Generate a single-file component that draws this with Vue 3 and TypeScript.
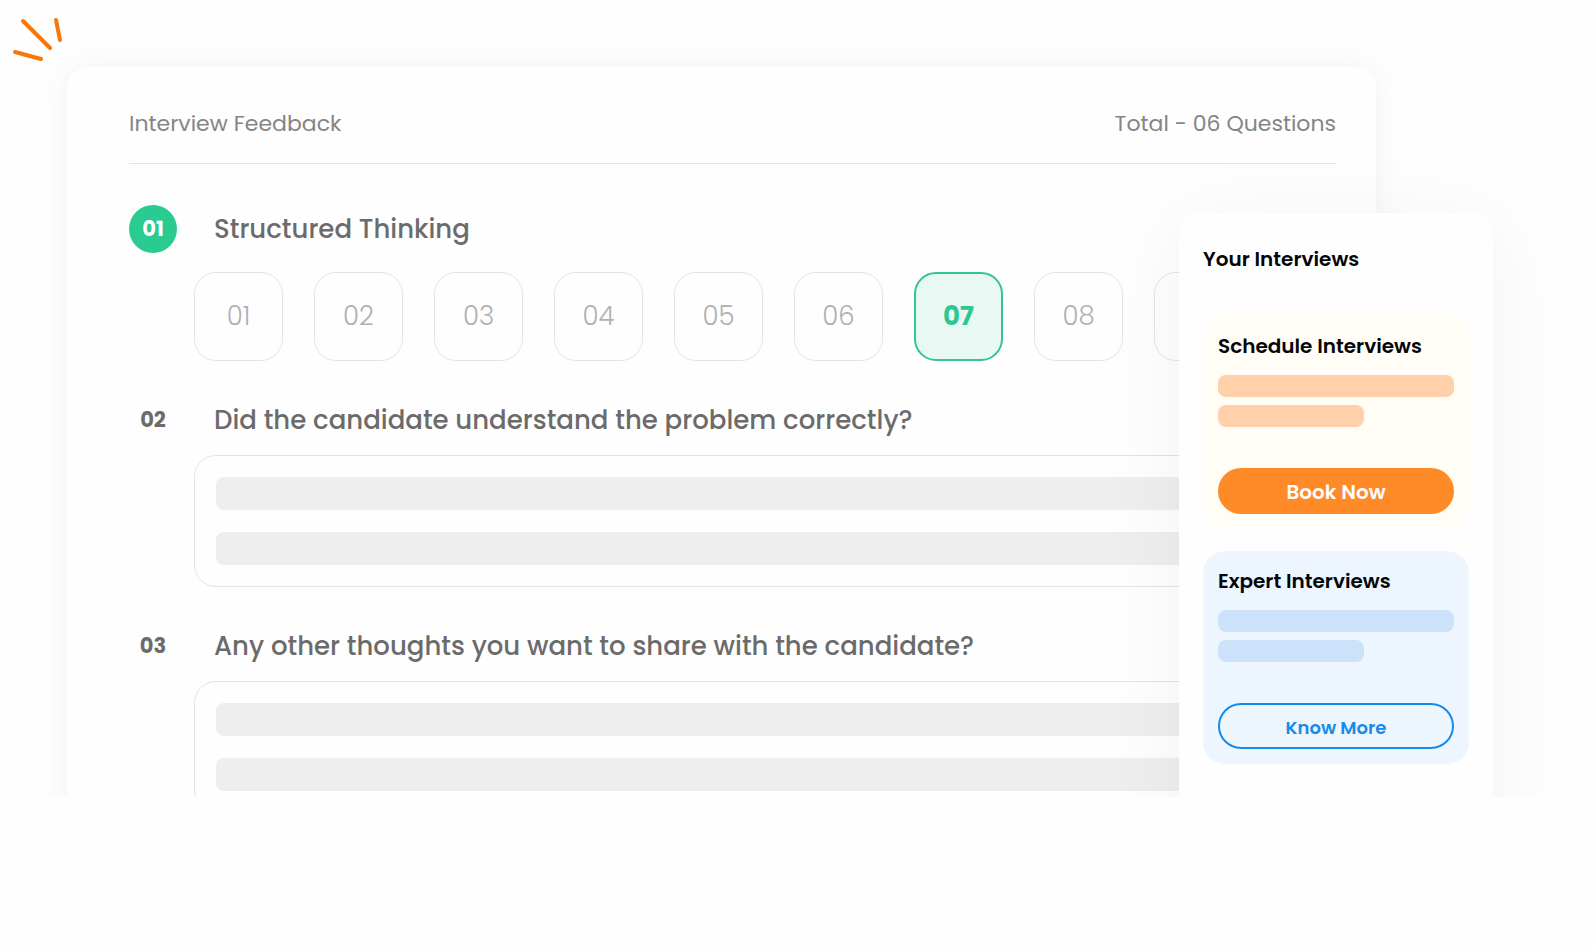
<script setup lang="ts">
import { ref } from 'vue'

interface Offer {
  id: string
  title: string
  action: string
}

const scores: string[] = ['01', '02', '03', '04', '05', '06', '07', '08', '09']
const selected = ref<string>('07')

const questions = [
  { number: '02', title: 'Did the candidate understand the problem correctly?' },
  { number: '03', title: 'Any other thoughts you want to share with the candidate?' },
]

const offers: Offer[] = [
  { id: 'schedule', title: 'Schedule Interviews', action: 'Book Now' },
  { id: 'expert', title: 'Expert Interviews', action: 'Know More' },
]
</script>

<template>
  <main class="stage">
    <svg class="spark" viewBox="0 0 52 46" aria-hidden="true">
      <path d="M11 5 38 32M44 4 48 24M3 36 29 43" />
    </svg>

    <section class="feedback">
      <header class="feedback-head">
        <span>Interview Feedback</span>
        <span>Total - 06 Questions</span>
      </header>

      <article class="question">
        <div class="question-head">
          <span class="number active">01</span>
          <h2>Structured Thinking</h2>
        </div>
        <div class="scores" role="group" aria-label="Structured Thinking">
          <button
            v-for="score in scores"
            :key="score"
            type="button"
            class="score"
            :class="{ selected: score === selected }"
            :aria-pressed="score === selected"
            @click="selected = score"
          >
            {{ score }}
          </button>
        </div>
      </article>

      <article v-for="question in questions" :key="question.number" class="question">
        <div class="question-head">
          <span class="number">{{ question.number }}</span>
          <h2>{{ question.title }}</h2>
        </div>
        <div class="answer">
          <div class="line"></div>
          <div class="line"></div>
        </div>
      </article>
    </section>

    <aside class="panel">
      <h2 class="panel-title">Your Interviews</h2>
      <section v-for="offer in offers" :key="offer.id" class="offer" :class="offer.id">
        <h3>{{ offer.title }}</h3>
        <div class="bar"></div>
        <div class="bar short"></div>
        <button type="button" class="action">{{ offer.action }}</button>
      </section>
    </aside>
  </main>
</template>

<style>
body {
  margin: 0;
  background: #fefefe;
}
</style>

<style scoped>
.stage {
  position: relative;
  box-sizing: border-box;
  height: 797px;
  padding: 67px 219px 0 67px;
  overflow: hidden;
  background: #fefefe;
  font-family: Poppins, Inter, "Open Sans", sans-serif;
}

h2,
h3 {
  margin: 0;
}

button {
  padding: 0;
  font-family: inherit;
  cursor: pointer;
}

.spark {
  position: absolute;
  top: 16px;
  left: 12px;
  width: 52px;
  height: 46px;
  fill: none;
  stroke: #f9760b;
  stroke-width: 4;
  stroke-linecap: round;
}

.feedback {
  box-sizing: border-box;
  min-height: 800px;
  padding: 0 40px 0 62px;
  border-radius: 20px;
  background: #fefefe;
  box-shadow: 0 0 32px rgba(0, 0, 0, 0.05);
}

.feedback-head {
  display: flex;
  align-items: center;
  justify-content: space-between;
  height: 97px;
  padding-top: 17px;
  box-sizing: border-box;
  border-bottom: 1px solid #e4e4e4;
  color: #858585;
  font-size: 22px;
  line-height: 32px;
}

.question {
  padding-top: 35px;
}

.feedback-head + .question {
  padding-top: 41px;
}

.question-head {
  display: flex;
  align-items: center;
  gap: 37px;
  height: 48px;
}

.question-head h2 {
  color: #6b6b6b;
  font-size: 26px;
  font-weight: 500;
  line-height: 40px;
  white-space: nowrap;
}

.number {
  flex: none;
  width: 48px;
  border-radius: 24px;
  color: #6b6b6b;
  font-size: 21px;
  font-weight: 700;
  line-height: 48px;
  text-align: center;
}

.number.active {
  background: #2acb91;
  color: #fefefe;
}

.scores {
  display: flex;
  gap: 31px;
  margin: 19px 0 0 65px;
}

.score {
  flex: none;
  box-sizing: border-box;
  width: 89px;
  height: 89px;
  border: 1px solid #e4e4e4;
  border-radius: 22px;
  background: transparent;
  color: #b0b0b0;
  font-size: 26px;
  font-weight: 300;
}

.score.selected {
  border: 2px solid #31c692;
  background: #e8f9f3;
  color: #2fc791;
  font-weight: 700;
}

.answer {
  display: grid;
  gap: 22px;
  margin: 11px 0 0 65px;
  padding: 21px;
  border: 1px solid #e4e4e4;
  border-radius: 22px;
}

.line {
  height: 33px;
  border-radius: 8px;
  background: #eee;
}

.panel {
  position: absolute;
  top: 213px;
  right: 102px;
  box-sizing: border-box;
  width: 314px;
  min-height: 640px;
  padding: 31px 24px;
  border-radius: 20px;
  background: #fefefe;
  box-shadow: 0 12px 90px rgba(0, 0, 0, 0.05);
}

.panel-title,
.offer h3 {
  color: #050505;
  font-size: 20px;
  font-weight: 600;
  line-height: 30px;
  white-space: nowrap;
}

.offer {
  padding: 15px;
  border-radius: 22px;
}

.offer h3 {
  margin-bottom: 14px;
}

.schedule {
  margin: 38px 0 22px;
  padding-top: 19px;
  background: #fffdf6;
}

.expert {
  background: #edf5ff;
}

.bar {
  height: 22px;
  border-radius: 8px;
}

.bar.short {
  width: 62%;
  margin-top: 8px;
}

.schedule .bar {
  background: #ffd0aa;
}

.expert .bar {
  background: #cbe2fa;
}

.action {
  display: block;
  box-sizing: border-box;
  width: 100%;
  height: 46px;
  margin-top: 41px;
  padding-top: 2px;
  border: 2px solid transparent;
  border-radius: 23px;
  font-size: 20px;
  font-weight: 600;
}

.schedule .action {
  border-color: #ff8a28;
  background: #ff8a28;
  color: #fefefe;
}

.expert .action {
  border-color: #168be9;
  background: transparent;
  color: #168be9;
  font-size: 18px;
}
</style>
